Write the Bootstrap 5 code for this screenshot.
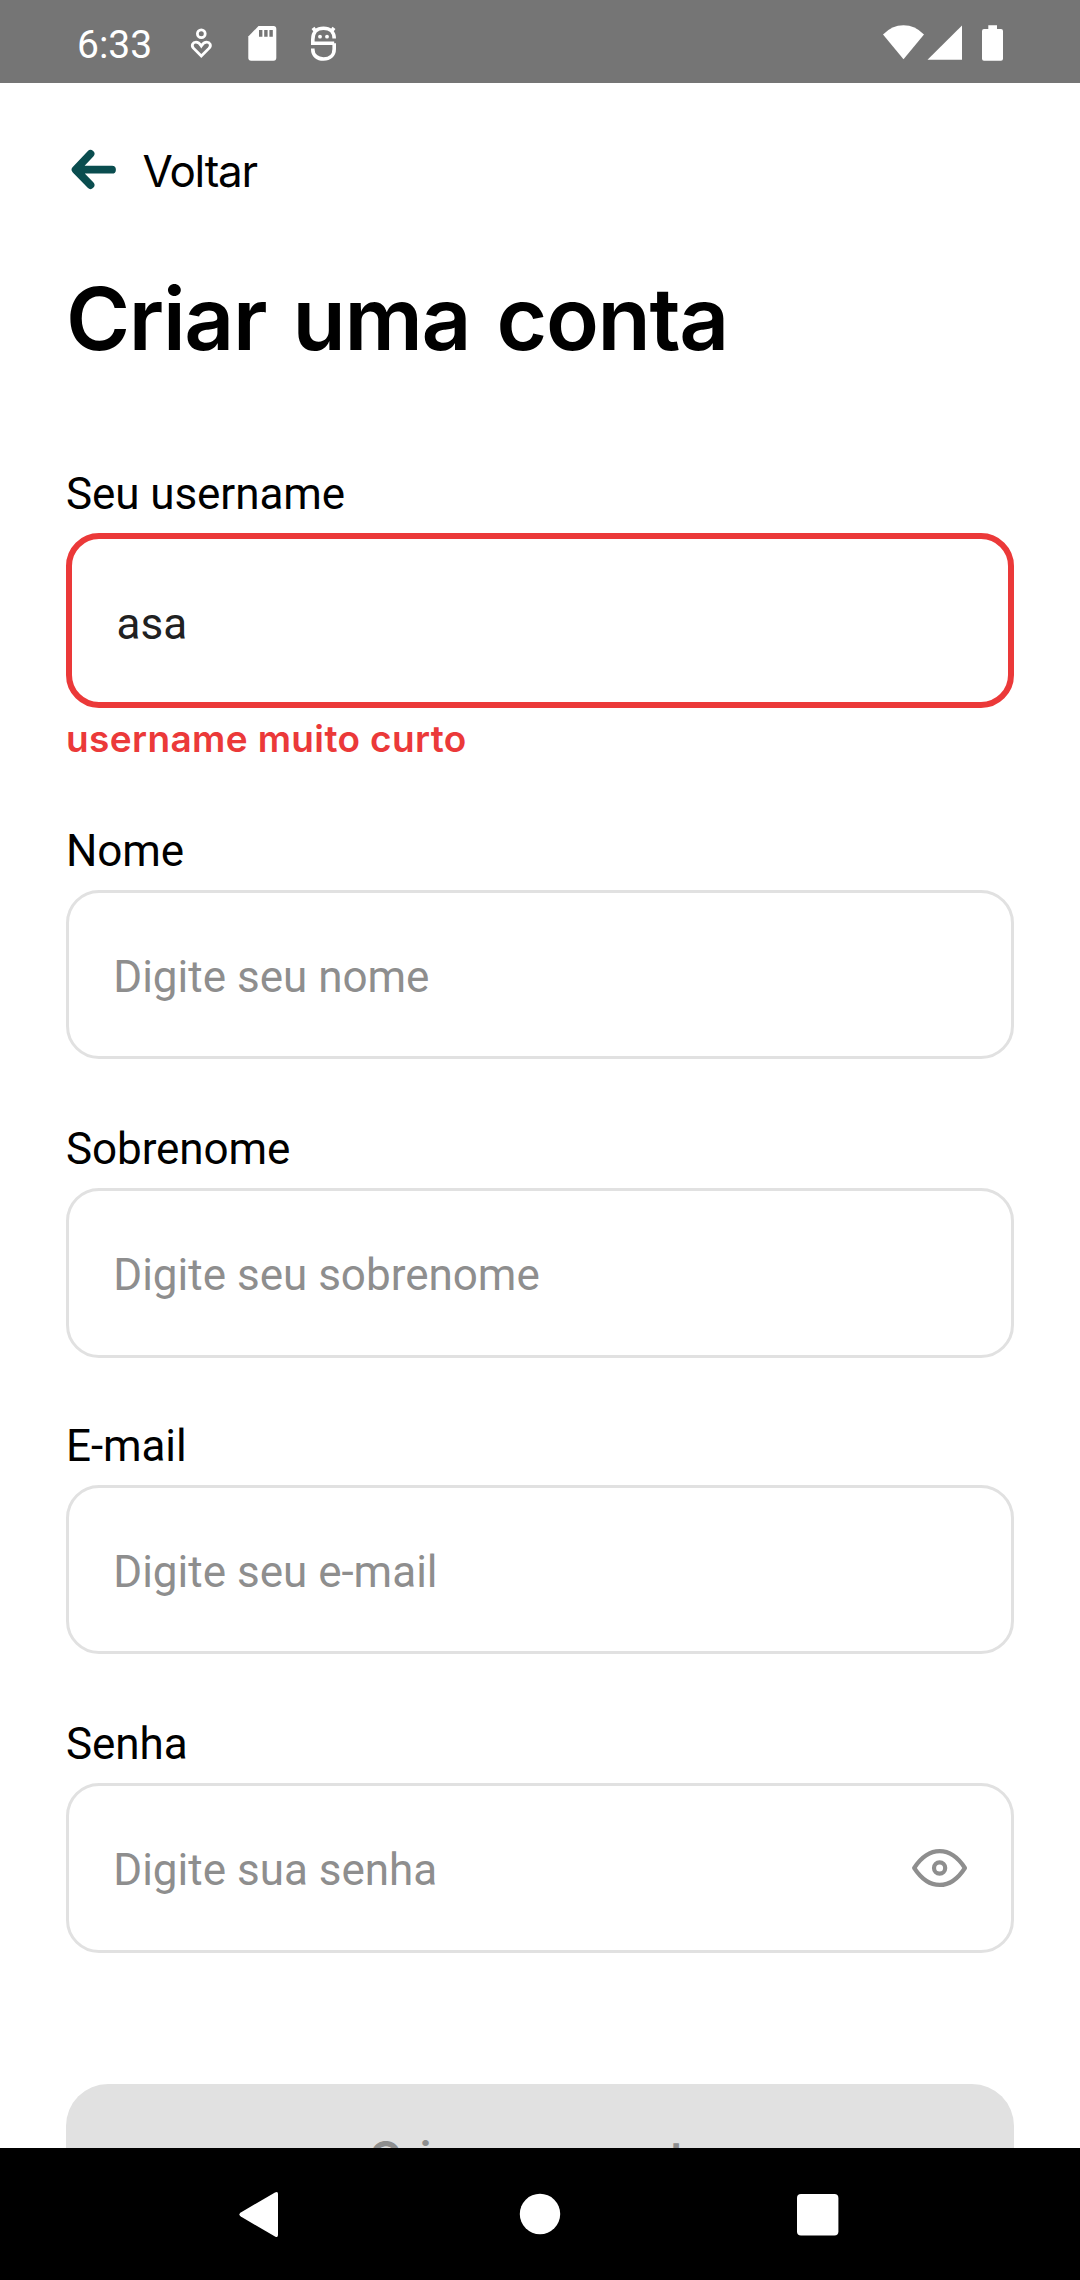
<!DOCTYPE html>
<html lang="pt-BR">
<head>
<meta charset="utf-8">
<meta name="viewport" content="width=device-width, initial-scale=1">
<title>Criar uma conta</title>
<link href="https://cdn.jsdelivr.net/npm/bootstrap@5.3.0/dist/css/bootstrap.min.css" rel="stylesheet">
<style>
  body { font-family: Roboto, sans-serif; color: #000; }
  .screen { width: 1080px; height: 2280px; }
  .status-bar { height: 83px; background: #757575; color: #fff; padding: 0 77px; }
  .clock { font-size: 39px; line-height: 46px; width: 112px; margin-top: 7px; }
  .content { padding: 0 66px; }
  .brand-font { font-family: Inter, sans-serif; }
  .back-link { height: 60px; margin-top: 58px; gap: 24.5px; padding-left: 4px; color: #000; font-size: 44px; line-height: 60px; letter-spacing: -1.2px; }
  .page-title { font-size: 87px; font-weight: 600; line-height: 100px; margin: 68px 0 0; letter-spacing: -1.3px; word-spacing: 5.7px; white-space: nowrap; }
  .fields { margin-top: 99px; }
  .field-group { margin-bottom: 62px; }
  .field-group .form-label { display: block; font-size: 44px; line-height: 52px; margin: 0 0 13px; letter-spacing: -0.08px; }
  .field-group .form-control { height: 170px; border: 3px solid #e1e1e1; border-radius: 33px; padding: 4px 44px 0 44.3px; font-size: 44px; color: #212121; background: #fff; }
  .field-group .form-control.snug { height: 169px; }
  .field-group .form-control::placeholder { color: #8e8e8e; opacity: 1; }
  .field-group .form-control.has-error { height: 175px; border: 6px solid #eb3939; padding: 7px 44px 0 44.5px; }
  .error-text { font-size: 37px; font-weight: 600; line-height: 48px; letter-spacing: .37px; color: #eb3939; margin-top: 7px; }
  .field-group.spaced { margin-bottom: 64px; }
  .eye { right: 47px; top: 65px; }
  .submit { height: 150px; margin-top: 131px; border-radius: 42px; background: #e1e1e1; color: #8e8e8e; font-size: 44px; font-weight: 600; line-height: 60px; letter-spacing: .2px; padding-top: 43px; border: 0; }
  .nav-keys { height: 132px; background: #000; }
</style>
</head>
<body>
<div class="screen d-flex flex-column overflow-hidden bg-white">
  <header class="status-bar d-flex align-items-center flex-shrink-0">
    <span class="clock">6:33</span>
    <svg width="150" height="83" viewBox="189 0 150 83" fill="none">
      <circle cx="201.3" cy="33.7" r="3.9" stroke="#fff" stroke-width="2.8"/>
      <path d="M201.3 56 L193.7 48.4 C190.7 45 193 42.2 196 42.2 C198.7 42.2 200 44 201.3 46 C202.6 44 204 42.2 206.7 42.2 C209.7 42.2 212 45 208.9 48.4Z" stroke="#fff" stroke-width="2.8"/>
      <path d="M258.5 26H273.5Q276.3 26 276.3 29V57.7Q276.3 60.7 273.5 60.7H251.2Q248.3 60.7 248.3 57.7V36.5Z" fill="#fff"/>
      <path d="M259 30h3.4v6.7h-3.4zM264.2 30h3.4v6.7h-3.4zM269.4 30h3.4v6.7h-3.4z" fill="#757575"/>
      <path d="M334.2 43.2H312.8V39.5C312.8 32 317 28.3 323.5 28.3S334.2 32 334.2 38.5M312.8 48.5V49.5C312.8 55.5 317.5 59 323.5 59S334.2 55.5 334.2 49V43.2M313 27.8l3 4M334 27.8l-3 4" stroke="#fff" stroke-width="3.6"/>
      <circle cx="320" cy="36.7" r="1.9" fill="#fff"/><circle cx="327" cy="36.7" r="1.9" fill="#fff"/>
    </svg>
    <svg class="ms-auto" width="120" height="83" viewBox="883 0 120 83" fill="#fff">
      <path d="M883 34.5Q892 25.3 903.5 25.3T924 34.5L903.5 59.3Z"/>
      <path d="M962 25.5V59.7H927.5Z"/>
      <path d="M988.3 25.3H997V29H1001Q1003 29 1003 31V58.7Q1003 60.7 1001 60.7H984Q982 60.7 982 58.7V31Q982 29 984 29H988.3Z"/>
    </svg>
  </header>

  <main class="content flex-grow-1 overflow-hidden">
    <a href="#" class="back-link brand-font d-flex align-items-center text-decoration-none">
      <svg width="48" height="48" viewBox="70 147 48 48" fill="none" stroke="#0a4d4f" stroke-width="7.8" stroke-linecap="round" stroke-linejoin="round">
        <path d="M112 169.7H76M90.5 153.8L75.6 169.7L90.5 185"/>
      </svg>
      <span>Voltar</span>
    </a>
    <h1 class="page-title brand-font">Criar uma conta</h1>

    <form class="fields">
      <div class="field-group">
        <label class="form-label" for="username">Seu username</label>
        <input id="username" type="text" class="form-control has-error" value="asa">
        <div class="error-text brand-font"><span>username muito curto</span></div>
      </div>
      <div class="field-group spaced">
        <label class="form-label" for="nome">Nome</label>
        <input id="nome" type="text" class="form-control snug" placeholder="Digite seu nome">
      </div>
      <div class="field-group">
        <label class="form-label" for="sobrenome">Sobrenome</label>
        <input id="sobrenome" type="text" class="form-control" placeholder="Digite seu sobrenome">
      </div>
      <div class="field-group spaced">
        <label class="form-label" for="email">E-mail</label>
        <input id="email" type="email" class="form-control snug" placeholder="Digite seu e-mail">
      </div>
      <div class="field-group mb-0">
        <label class="form-label" for="senha">Senha</label>
        <div class="position-relative">
          <input id="senha" type="password" class="form-control" placeholder="Digite sua senha">
          <svg class="eye position-absolute" width="55" height="40" viewBox="912 1848 55 40" fill="none" stroke="#8e8e8e" stroke-width="4.2" stroke-linejoin="round">
            <path d="M914.2 1868C929 1845.6 950.4 1845.6 964.9 1868C950.4 1890.6 929 1890.6 914.2 1868Z"/>
            <circle cx="939.6" cy="1868" r="5.6"/>
          </svg>
        </div>
      </div>
      <button type="button" class="submit brand-font d-flex justify-content-center align-items-start w-100">Criar uma conta</button>
    </form>
  </main>

  <footer class="nav-keys flex-shrink-0">
    <svg class="d-block" width="1080" height="132" viewBox="0 2148 1080 132" fill="#fff">
      <path d="M275 2192.5Q278 2190.8 278 2194V2235Q278 2238 275 2236.5L240.8 2216.5Q238 2214.5 240.8 2212.5Z"/>
      <circle cx="540" cy="2214" r="20.2"/>
      <rect x="797" y="2194" width="41.4" height="41.4" rx="4"/>
    </svg>
  </footer>
</div>
<script src="https://cdn.jsdelivr.net/npm/bootstrap@5.3.0/dist/js/bootstrap.bundle.min.js"></script>
</body>
</html>
